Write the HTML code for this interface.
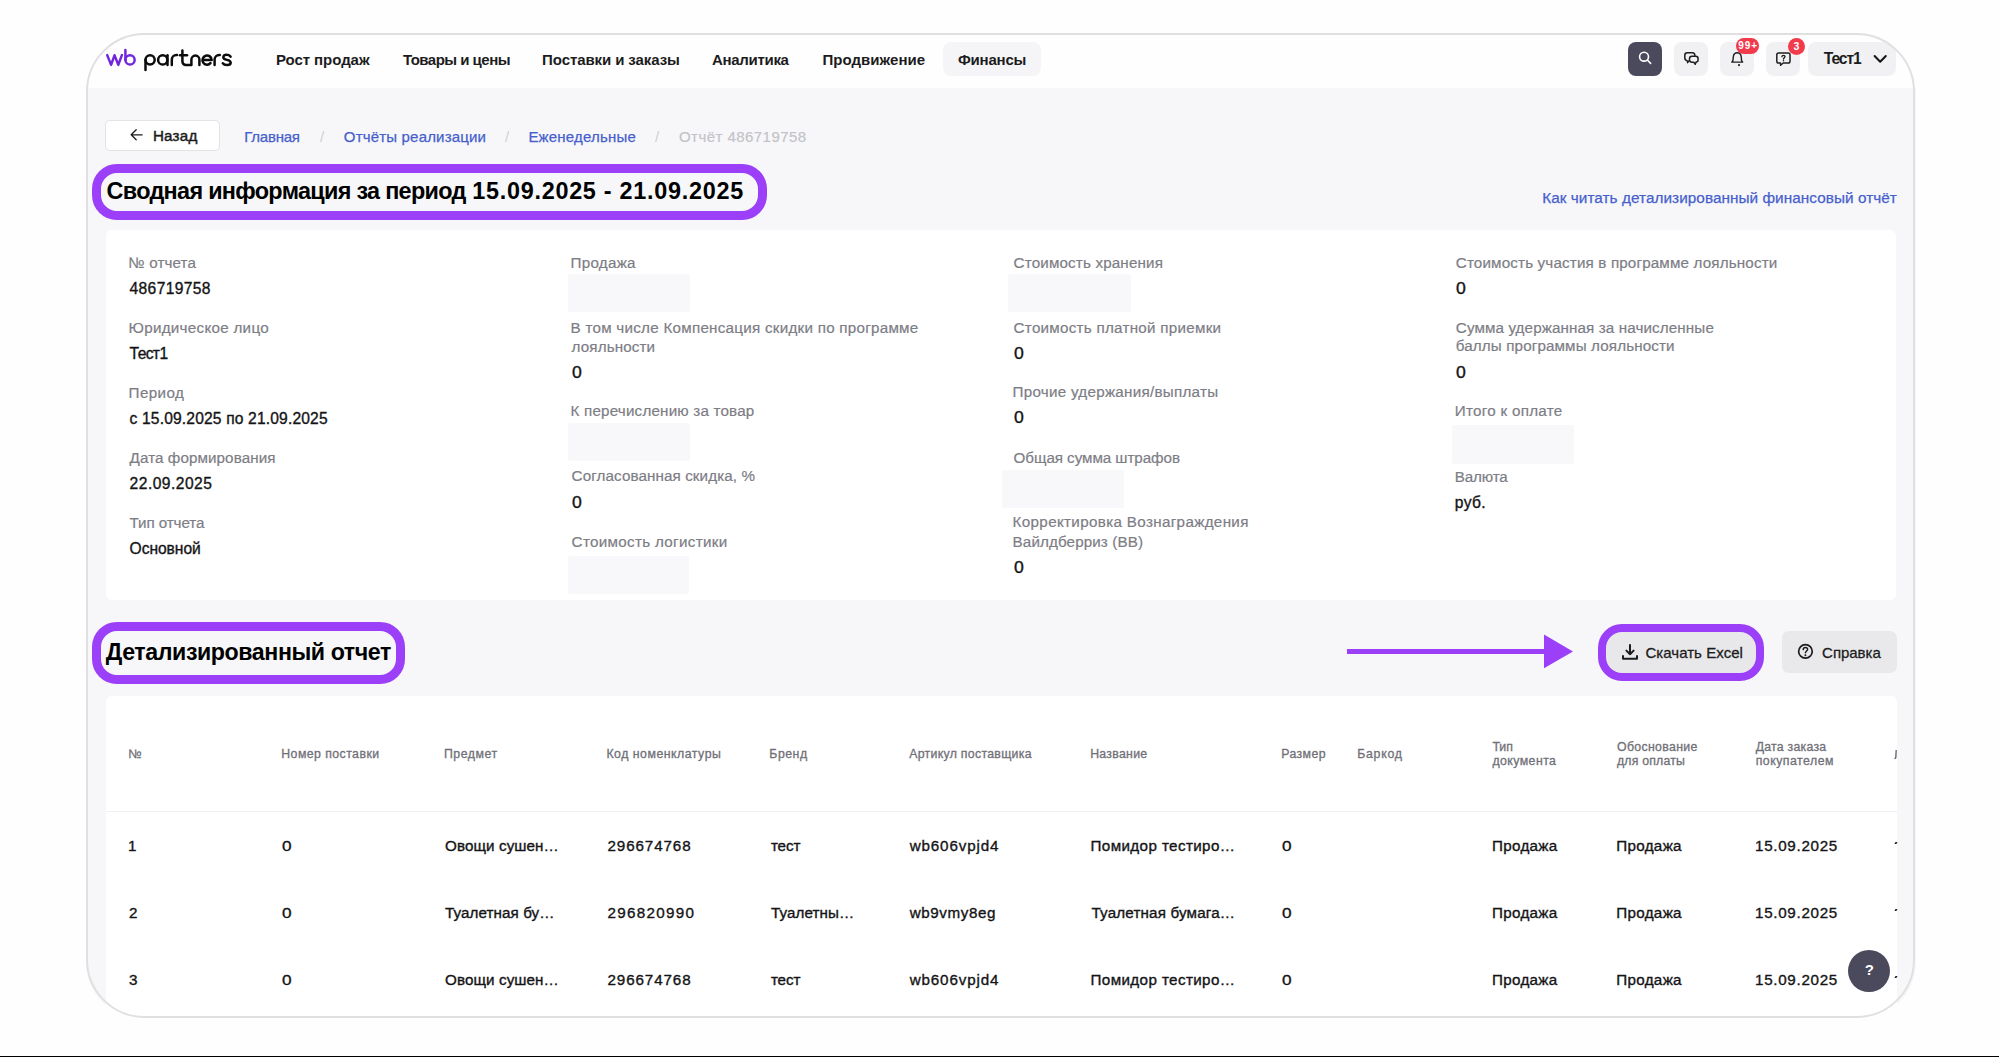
<!DOCTYPE html>
<html lang="ru">
<head>
<meta charset="utf-8">
<title>wb partners — Отчёт 486719758</title>
<style>
html,body{margin:0;padding:0;}
body{width:1999px;height:1057px;background:#fefefe;position:relative;overflow:hidden;font-family:"Liberation Sans",sans-serif;}
#clip{position:absolute;left:86px;top:34px;width:1830px;height:986px;border-radius:58px;overflow:hidden;background:#fefefe;}
#pg{position:absolute;left:-86px;top:-34px;width:1999px;height:1057px;}
#border{position:absolute;left:86px;top:33.4px;width:1824.8px;height:981px;border:2.6px solid #e0e0e2;border-radius:58.6px;pointer-events:none;}
.a{position:absolute;box-sizing:border-box;}
.t{position:absolute;white-space:nowrap;line-height:1;font-family:"Liberation Sans",sans-serif;}
svg{position:absolute;overflow:visible;}
#botline{position:absolute;left:0;top:1055.7px;width:1999px;height:1.3px;background:#000;}
</style>
</head>
<body>
<div id="clip"><div id="pg">
<!-- content background -->
<div class="a" style="left:86px;top:88px;width:1830px;height:940px;background:#f7f7f9;"></div>
<!-- nav active pill -->
<div class="a" style="left:943px;top:42.2px;width:98px;height:33.8px;border-radius:8px;background:#f5f5f7;"></div>
<!-- header buttons -->
<div class="a" style="left:1628px;top:41.6px;width:34.4px;height:34.3px;border-radius:8px;background:#4b4a5c;"></div>
<div class="a" style="left:1674px;top:42.2px;width:34px;height:33.8px;border-radius:8px;background:#f1f1f3;"></div>
<div class="a" style="left:1720px;top:42.2px;width:33.6px;height:33.8px;border-radius:8px;background:#f1f1f3;"></div>
<div class="a" style="left:1766.4px;top:41.8px;width:33.4px;height:34px;border-radius:8px;background:#f1f1f3;"></div>
<div class="a" style="left:1808.4px;top:42px;width:88.1px;height:33.8px;border-radius:8px;background:#f1f1f3;"></div>
<!-- back button -->
<div class="a" style="left:105.4px;top:120.3px;width:115.1px;height:30.5px;border-radius:5px;background:#fff;border:1px solid #e3e3e6;"></div>
<!-- title highlight -->
<div class="a" style="left:92px;top:163.5px;width:675px;height:56.5px;border-radius:25px;border:9px solid #9b3ff8;"></div>
<!-- card 1 -->
<div class="a" style="left:106px;top:230px;width:1790px;height:370px;border-radius:6px;background:#fff;"></div>
<div class="a" style="left:568px;top:274.2px;width:122px;height:37.4px;border-radius:2.5px;background:#f8f8fa;"></div>
<div class="a" style="left:568.2px;top:423.1px;width:121.6px;height:37.9px;border-radius:2.5px;background:#f8f8fa;"></div>
<div class="a" style="left:568.2px;top:555.6px;width:120.5px;height:38.4px;border-radius:2.5px;background:#f8f8fa;"></div>
<div class="a" style="left:1008.3px;top:274.3px;width:122.9px;height:37.3px;border-radius:2.5px;background:#f8f8fa;"></div>
<div class="a" style="left:1002.2px;top:470.2px;width:122.2px;height:37.8px;border-radius:2.5px;background:#f8f8fa;"></div>
<div class="a" style="left:1452px;top:425px;width:121.5px;height:38.8px;border-radius:2.5px;background:#f8f8fa;"></div>
<!-- section 2 highlight -->
<div class="a" style="left:92px;top:621.7px;width:312.6px;height:62.3px;border-radius:25px;border:9px solid #9b3ff8;"></div>
<!-- arrow -->
<div class="a" style="left:1347.2px;top:648.5px;width:200px;height:5.5px;background:#9b3ff8;"></div>
<svg style="left:0;top:0" width="1" height="1"><polygon points="1544,634.5 1573,651.4 1544,668.3" fill="#9b3ff8"/></svg>
<!-- excel button -->
<div class="a" style="left:1597.6px;top:624.3px;width:166.2px;height:56.3px;border-radius:24px;border:8.6px solid #9b3ff8;background:#e8e8ea;"></div>
<!-- spravka button -->
<div class="a" style="left:1781.6px;top:630.9px;width:115.9px;height:42px;border-radius:7px;background:#e9e9ec;"></div>
<!-- table card -->
<div class="a" style="left:106px;top:695.8px;width:1790.5px;height:400px;border-radius:6px;background:#fff;"></div>
<div class="a" style="left:106px;top:810.5px;width:1790.5px;height:1px;background:#f0f0f2;"></div>
<!-- help bubble -->
<div class="a" style="left:1847.6px;top:950.2px;width:42.2px;height:42px;border-radius:50%;background:#4b4a5c;"></div>
<!-- logo -->
<svg style="left:0;top:0" width="1" height="1">
 <g fill="none" stroke-width="2.5" stroke-linecap="round" stroke-linejoin="round">
  <g stroke="#7127de">
   <path d="M107.2,55.1 L111.1,64.9 L114.5,55.3 L118.3,64.9 L121.9,55.1"/>
   <path d="M125.4,49.9 V60"/>
   <circle cx="130.05" cy="59.95" r="4.6"/>
  </g>
  <g stroke="#0c0c0e">
   <path d="M145.5,70 V59.8"/>
   <circle cx="150.1" cy="59.8" r="4.6"/>
   <circle cx="162.7" cy="59.9" r="4.6"/>
   <path d="M167.5,55.2 V65"/>
   <path d="M171.8,65 V59.6 A4.6,4.6 0 0 1 176.4,55 H177"/>
   <path d="M182.4,50.5 V61.6 A3.4,3.4 0 0 0 185.8,65 H191.4 V59.6 A4,4 0 0 1 199.4,59.6 V65"/>
   <path d="M180,55.3 H187"/>
   <path d="M202.6,60 H211.7 A4.6,4.6 0 1 0 210.5,63.2"/>
   <path d="M214.6,65 V59.6 A4.6,4.6 0 0 1 219.2,55 H219.8"/>
   <path d="M230.6,56.6 C229.9,55.3 228.6,54.7 226.8,54.7 C224.7,54.7 223.3,55.6 223.3,57.3 C223.3,59.1 225,59.5 226.9,59.9 C228.9,60.3 230.7,60.8 230.7,62.8 C230.7,64.4 229.2,65.1 227,65.1 C225.1,65.1 223.6,64.5 222.8,63.3"/>
  </g>
 </g>
</svg>
<!-- header icons -->
<svg style="left:0;top:0" width="1" height="1">
 <g fill="none" stroke-linecap="round" stroke-linejoin="round">
  <circle cx="1644.05" cy="56.7" r="4.45" stroke="#fff" stroke-width="1.6"/>
  <path d="M1647.6,60.3 L1650.6,63.4" stroke="#fff" stroke-width="1.6"/>
  <!-- chat -->
  <path d="M1689.2,60.6 L1687.6,62.6 L1687.4,60.9 C1685.6,60.5 1684.8,59.6 1684.8,57.8 V55.3 C1684.8,53.6 1685.7,52.8 1687.4,52.8 H1692.4 C1694,52.8 1694.9,53.6 1694.9,55.6" stroke="#1f1f22" stroke-width="1.5"/>
  <path d="M1691.9,56.3 H1695.6 C1697.3,56.3 1698.1,57.1 1698.1,58.8 V59.7 C1698.1,61.2 1697.3,62 1696.1,62.1 L1695.3,64.3 L1693.8,62.2 H1691.9 C1690.3,62.2 1689.5,61.4 1689.5,59.8 V58.8 C1689.5,57.1 1690.3,56.3 1691.9,56.3 Z" stroke="#1f1f22" stroke-width="1.5"/>
  <!-- bell -->
  <path d="M1731.8,62.1 H1742.7 L1741.6,60.6 L1741.2,56.8 C1740.9,54.2 1739.4,52.8 1737.3,52.8 C1735.2,52.8 1733.6,54.2 1733.3,56.8 L1732.9,60.6 Z" stroke="#1f1f22" stroke-width="1.4"/>
  <!-- question bubble -->
  <path d="M1778.6,53 H1788.2 C1789.4,53 1790,53.6 1790,54.8 V61.2 C1790,62.4 1789.4,63 1788.2,63 H1783.2 L1780.6,65.3 L1780.5,63 H1778.6 C1777.4,63 1776.8,62.4 1776.8,61.2 V54.8 C1776.8,53.6 1777.4,53 1778.6,53 Z" stroke="#1f1f22" stroke-width="1.5"/>
  <path d="M1781.9,56.6 C1782,55.8 1782.6,55.3 1783.5,55.3 C1784.4,55.3 1785,55.9 1785,56.6 C1785,57.6 1783.6,57.8 1783.5,59" stroke="#1f1f22" stroke-width="1.35"/>
  <!-- chevron -->
  <path d="M1874.6,56 L1880.2,61.8 L1885.8,56" stroke="#141416" stroke-width="2"/>
  <!-- back arrow -->
  <path d="M142.2,134.8 H131.2 M136.2,129.8 L131.2,134.8 L136.2,139.8" stroke="#1c1c20" stroke-width="1.3"/>
  <!-- download -->
  <path d="M1630,645 V654.2 M1626.4,650.6 L1630,654.2 L1633.6,650.6 M1623,656 V658.7 H1637 V656" stroke="#1c1c20" stroke-width="2"/>
  <!-- question circle -->
  <circle cx="1805.45" cy="651.4" r="6.8" stroke="#1c1c20" stroke-width="1.7"/>
  <path d="M1803.2,649.6 C1803.3,648.3 1804.2,647.6 1805.4,647.6 C1806.7,647.6 1807.6,648.4 1807.6,649.5 C1807.6,650.9 1805.5,651.1 1805.4,652.8" stroke="#1c1c20" stroke-width="1.5"/>
 </g>
 <circle cx="1783.5" cy="60.8" r="0.8" fill="#1f1f22"/>
 <circle cx="1739" cy="65.1" r="1.1" fill="#1f1f22"/>
 <circle cx="1805.4" cy="655.3" r="0.95" fill="#1c1c20"/>
</svg>
<!-- badges -->
<div class="a" style="left:1736.4px;top:37.7px;width:23.1px;height:16.4px;border-radius:8.2px;background:#f23a4d;"></div>
<div class="a" style="left:1788.2px;top:37.9px;width:17px;height:17px;border-radius:50%;background:#f23a4d;"></div>
<!-- clipped next-column glyph remnants -->
<svg style="left:0;top:0" width="1" height="1"><path d="M1896.2,750 L1895.8,757.6 L1894.6,758.8" fill="none" stroke="#5c5c64" stroke-width="1.3"/></svg>
<div class="a" style="left:1894.6px;top:841.6px;width:2px;height:1.8px;background:#222;transform:skewX(-30deg);"></div>
<div class="a" style="left:1894.6px;top:908.6px;width:2px;height:1.8px;background:#222;transform:skewX(-30deg);"></div>
<div class="a" style="left:1894.6px;top:975.6px;width:2px;height:1.8px;background:#222;transform:skewX(-30deg);"></div>

<div class="t" style="left:275.90px;top:51.95px;font-size:15px;font-weight:700;color:#1c1c20;letter-spacing:-0.050px;">Рост продаж</div>
<div class="t" style="left:403.00px;top:51.95px;font-size:15px;font-weight:700;color:#1c1c20;letter-spacing:-0.517px;">Товары и цены</div>
<div class="t" style="left:542.10px;top:51.95px;font-size:15px;font-weight:700;color:#1c1c20;letter-spacing:-0.092px;">Поставки и заказы</div>
<div class="t" style="left:711.90px;top:51.95px;font-size:15px;font-weight:700;color:#1c1c20;letter-spacing:-0.295px;">Аналитика</div>
<div class="t" style="left:822.40px;top:51.95px;font-size:15px;font-weight:700;color:#1c1c20;letter-spacing:0.047px;">Продвижение</div>
<div class="t" style="left:958.00px;top:51.95px;font-size:15px;font-weight:700;color:#1c1c20;letter-spacing:-0.205px;">Финансы</div>
<div class="t" style="left:1823.80px;top:51.34px;font-size:15.6px;font-weight:700;color:#1c1c20;letter-spacing:-1.081px;">Тест1</div>
<div class="t" style="left:152.90px;top:128.48px;font-size:15.2px;color:#1c1c20;letter-spacing:0.212px;-webkit-text-stroke:0.45px #1c1c20;">Назад</div>
<div class="t" style="left:244.30px;top:128.65px;font-size:15px;color:#4560cc;letter-spacing:-0.245px;-webkit-text-stroke:0.25px #4560cc;">Главная</div>
<div class="t" style="left:320.00px;top:128.65px;font-size:15px;color:#cfcfd4;">/</div>
<div class="t" style="left:343.80px;top:128.65px;font-size:15px;color:#4560cc;letter-spacing:0.184px;-webkit-text-stroke:0.25px #4560cc;">Отчёты реализации</div>
<div class="t" style="left:505.00px;top:128.65px;font-size:15px;color:#cfcfd4;">/</div>
<div class="t" style="left:528.40px;top:128.65px;font-size:15px;color:#4560cc;letter-spacing:0.190px;-webkit-text-stroke:0.25px #4560cc;">Еженедельные</div>
<div class="t" style="left:655.00px;top:128.65px;font-size:15px;color:#cfcfd4;">/</div>
<div class="t" style="left:679.00px;top:128.65px;font-size:15px;color:#c3c3c9;letter-spacing:0.452px;-webkit-text-stroke:0.2px #c3c3c9;">Отчёт 486719758</div>
<div class="t" style="left:106.60px;top:179.71px;font-size:23.4px;font-weight:700;color:#000;letter-spacing:-0.690px;">Сводная информация за период</div>
<div class="t" style="left:472.20px;top:179.71px;font-size:23.4px;font-weight:700;color:#000;letter-spacing:0.736px;">15.09.2025 - 21.09.2025</div>
<div class="t" style="left:1542.20px;top:189.90px;font-size:15.3px;color:#4560cc;letter-spacing:0.061px;-webkit-text-stroke:0.25px #4560cc;">Как читать детализированный финансовый отчёт</div>
<div class="t" style="left:128.60px;top:254.68px;font-size:15.2px;color:#7d7d85;letter-spacing:0.097px;-webkit-text-stroke:0.2px #7d7d85;">№ отчета</div>
<div class="t" style="left:129.60px;top:280.74px;font-size:15.6px;color:#141416;letter-spacing:0.340px;-webkit-text-stroke:0.35px #141416;">486719758</div>
<div class="t" style="left:128.60px;top:319.88px;font-size:15.2px;color:#7d7d85;letter-spacing:0.282px;-webkit-text-stroke:0.2px #7d7d85;">Юридическое лицо</div>
<div class="t" style="left:129.60px;top:345.94px;font-size:15.6px;color:#141416;letter-spacing:-0.615px;-webkit-text-stroke:0.35px #141416;">Тест1</div>
<div class="t" style="left:128.60px;top:384.68px;font-size:15.2px;color:#7d7d85;letter-spacing:0.399px;-webkit-text-stroke:0.2px #7d7d85;">Период</div>
<div class="t" style="left:129.60px;top:410.54px;font-size:15.6px;color:#141416;letter-spacing:0.159px;-webkit-text-stroke:0.35px #141416;">с 15.09.2025 по 21.09.2025</div>
<div class="t" style="left:129.60px;top:449.88px;font-size:15.2px;color:#7d7d85;letter-spacing:0.083px;-webkit-text-stroke:0.2px #7d7d85;">Дата формирования</div>
<div class="t" style="left:129.60px;top:475.94px;font-size:15.6px;color:#141416;letter-spacing:0.470px;-webkit-text-stroke:0.35px #141416;">22.09.2025</div>
<div class="t" style="left:129.60px;top:514.68px;font-size:15.2px;color:#7d7d85;letter-spacing:-0.105px;-webkit-text-stroke:0.2px #7d7d85;">Тип отчета</div>
<div class="t" style="left:129.60px;top:541.14px;font-size:15.6px;color:#141416;letter-spacing:-0.054px;-webkit-text-stroke:0.35px #141416;">Основной</div>
<div class="t" style="left:570.60px;top:254.68px;font-size:15.2px;color:#7d7d85;letter-spacing:0.259px;-webkit-text-stroke:0.2px #7d7d85;">Продажа</div>
<div class="t" style="left:570.60px;top:319.88px;font-size:15.2px;color:#7d7d85;letter-spacing:0.255px;-webkit-text-stroke:0.2px #7d7d85;">В том числе Компенсация скидки по программе</div>
<div class="t" style="left:571.60px;top:339.08px;font-size:15.2px;color:#7d7d85;letter-spacing:0.127px;-webkit-text-stroke:0.2px #7d7d85;">лояльности</div>
<div class="t" style="left:571.60px;top:365.24px;font-size:15.6px;color:#141416;-webkit-text-stroke:0.35px #141416;transform:scaleX(1.13);transform-origin:0 0;">0</div>
<div class="t" style="left:570.60px;top:403.38px;font-size:15.2px;color:#7d7d85;letter-spacing:0.186px;-webkit-text-stroke:0.2px #7d7d85;">К перечислению за товар</div>
<div class="t" style="left:571.60px;top:468.38px;font-size:15.2px;color:#7d7d85;letter-spacing:0.100px;-webkit-text-stroke:0.2px #7d7d85;">Согласованная скидка, %</div>
<div class="t" style="left:571.60px;top:495.24px;font-size:15.6px;color:#141416;-webkit-text-stroke:0.35px #141416;transform:scaleX(1.13);transform-origin:0 0;">0</div>
<div class="t" style="left:571.60px;top:533.88px;font-size:15.2px;color:#7d7d85;letter-spacing:0.315px;-webkit-text-stroke:0.2px #7d7d85;">Стоимость логистики</div>
<div class="t" style="left:1013.60px;top:254.58px;font-size:15.2px;color:#7d7d85;letter-spacing:0.156px;-webkit-text-stroke:0.2px #7d7d85;">Стоимость хранения</div>
<div class="t" style="left:1013.60px;top:319.68px;font-size:15.2px;color:#7d7d85;letter-spacing:0.265px;-webkit-text-stroke:0.2px #7d7d85;">Стоимость платной приемки</div>
<div class="t" style="left:1013.60px;top:345.74px;font-size:15.6px;color:#141416;-webkit-text-stroke:0.35px #141416;transform:scaleX(1.13);transform-origin:0 0;">0</div>
<div class="t" style="left:1012.60px;top:383.88px;font-size:15.2px;color:#7d7d85;letter-spacing:0.268px;-webkit-text-stroke:0.2px #7d7d85;">Прочие удержания/выплаты</div>
<div class="t" style="left:1013.60px;top:410.44px;font-size:15.6px;color:#141416;-webkit-text-stroke:0.35px #141416;transform:scaleX(1.13);transform-origin:0 0;">0</div>
<div class="t" style="left:1013.60px;top:449.68px;font-size:15.2px;color:#7d7d85;letter-spacing:-0.063px;-webkit-text-stroke:0.2px #7d7d85;">Общая сумма штрафов</div>
<div class="t" style="left:1012.60px;top:514.38px;font-size:15.2px;color:#7d7d85;letter-spacing:0.338px;-webkit-text-stroke:0.2px #7d7d85;">Корректировка Вознаграждения</div>
<div class="t" style="left:1012.60px;top:533.68px;font-size:15.2px;color:#7d7d85;letter-spacing:0.111px;-webkit-text-stroke:0.2px #7d7d85;">Вайлдберриз (ВВ)</div>
<div class="t" style="left:1013.60px;top:559.84px;font-size:15.6px;color:#141416;-webkit-text-stroke:0.35px #141416;transform:scaleX(1.13);transform-origin:0 0;">0</div>
<div class="t" style="left:1455.80px;top:254.58px;font-size:15.2px;color:#7d7d85;letter-spacing:0.156px;-webkit-text-stroke:0.2px #7d7d85;">Стоимость участия в программе лояльности</div>
<div class="t" style="left:1455.80px;top:280.84px;font-size:15.6px;color:#141416;-webkit-text-stroke:0.35px #141416;transform:scaleX(1.13);transform-origin:0 0;">0</div>
<div class="t" style="left:1455.80px;top:319.58px;font-size:15.2px;color:#7d7d85;letter-spacing:0.114px;-webkit-text-stroke:0.2px #7d7d85;">Сумма удержанная за начисленные</div>
<div class="t" style="left:1455.80px;top:338.48px;font-size:15.2px;color:#7d7d85;letter-spacing:0.129px;-webkit-text-stroke:0.2px #7d7d85;">баллы программы лояльности</div>
<div class="t" style="left:1455.80px;top:364.64px;font-size:15.6px;color:#141416;-webkit-text-stroke:0.35px #141416;transform:scaleX(1.13);transform-origin:0 0;">0</div>
<div class="t" style="left:1454.80px;top:403.48px;font-size:15.2px;color:#7d7d85;letter-spacing:0.284px;-webkit-text-stroke:0.2px #7d7d85;">Итого к оплате</div>
<div class="t" style="left:1454.80px;top:468.68px;font-size:15.2px;color:#7d7d85;letter-spacing:-0.156px;-webkit-text-stroke:0.2px #7d7d85;">Валюта</div>
<div class="t" style="left:1454.80px;top:494.84px;font-size:15.6px;color:#141416;letter-spacing:0.366px;-webkit-text-stroke:0.35px #141416;">руб.</div>
<div class="t" style="left:105.80px;top:640.68px;font-size:23.2px;font-weight:700;color:#000;letter-spacing:-0.423px;">Детализированный отчет</div>
<div class="t" style="left:1645.50px;top:645.15px;font-size:15px;color:#1c1c20;letter-spacing:0.028px;-webkit-text-stroke:0.3px #1c1c20;">Скачать Excel</div>
<div class="t" style="left:1822.10px;top:645.15px;font-size:15px;color:#1c1c20;letter-spacing:-0.033px;-webkit-text-stroke:0.3px #1c1c20;">Справка</div>
<div class="t" style="left:1738.30px;top:41.10px;font-size:10px;font-weight:700;color:#fff;letter-spacing:0.888px;">99+</div>
<div class="t" style="left:1793.60px;top:41.28px;font-size:10.5px;font-weight:700;color:#fff;">3</div>
<div class="t" style="left:1864.80px;top:961.85px;font-size:15px;font-weight:700;color:#fff;">?</div>
<div class="t" style="left:128.20px;top:748.25px;font-size:12.3px;color:#707078;-webkit-text-stroke:0.3px #707078;">№</div>
<div class="t" style="left:281.30px;top:748.25px;font-size:12.3px;color:#707078;letter-spacing:0.442px;-webkit-text-stroke:0.3px #707078;">Номер поставки</div>
<div class="t" style="left:443.90px;top:748.25px;font-size:12.3px;color:#707078;letter-spacing:0.566px;-webkit-text-stroke:0.3px #707078;">Предмет</div>
<div class="t" style="left:606.40px;top:748.25px;font-size:12.3px;color:#707078;letter-spacing:0.512px;-webkit-text-stroke:0.3px #707078;">Код номенклатуры</div>
<div class="t" style="left:769.30px;top:748.25px;font-size:12.3px;color:#707078;letter-spacing:0.515px;-webkit-text-stroke:0.3px #707078;">Бренд</div>
<div class="t" style="left:909.20px;top:748.25px;font-size:12.3px;color:#707078;letter-spacing:0.300px;-webkit-text-stroke:0.3px #707078;">Артикул поставщика</div>
<div class="t" style="left:1090.20px;top:748.25px;font-size:12.3px;color:#707078;letter-spacing:0.284px;-webkit-text-stroke:0.3px #707078;">Название</div>
<div class="t" style="left:1281.20px;top:748.25px;font-size:12.3px;color:#707078;letter-spacing:0.435px;-webkit-text-stroke:0.3px #707078;">Размер</div>
<div class="t" style="left:1357.20px;top:748.25px;font-size:12.3px;color:#707078;letter-spacing:0.753px;-webkit-text-stroke:0.3px #707078;">Баркод</div>
<div class="t" style="left:1492.40px;top:740.75px;font-size:12.3px;color:#707078;-webkit-text-stroke:0.3px #707078;">Тип</div>
<div class="t" style="left:1492.40px;top:755.44px;font-size:12.3px;color:#707078;letter-spacing:0.447px;-webkit-text-stroke:0.3px #707078;">документа</div>
<div class="t" style="left:1617.00px;top:740.75px;font-size:12.3px;color:#707078;letter-spacing:0.338px;-webkit-text-stroke:0.3px #707078;">Обоснование</div>
<div class="t" style="left:1617.00px;top:755.44px;font-size:12.3px;color:#707078;letter-spacing:0.189px;-webkit-text-stroke:0.3px #707078;">для оплаты</div>
<div class="t" style="left:1755.70px;top:740.75px;font-size:12.3px;color:#707078;letter-spacing:0.249px;-webkit-text-stroke:0.3px #707078;">Дата заказа</div>
<div class="t" style="left:1755.70px;top:755.44px;font-size:12.3px;color:#707078;letter-spacing:0.497px;-webkit-text-stroke:0.3px #707078;">покупателем</div>
<div class="t" style="left:128.10px;top:838.28px;font-size:15.2px;color:#141416;-webkit-text-stroke:0.35px #141416;">1</div>
<div class="t" style="left:282.30px;top:838.28px;font-size:15.2px;color:#141416;-webkit-text-stroke:0.35px #141416;transform:scaleX(1.13);transform-origin:0 0;">0</div>
<div class="t" style="left:445.10px;top:838.28px;font-size:15.2px;color:#141416;letter-spacing:0.085px;-webkit-text-stroke:0.35px #141416;">Овощи сушен…</div>
<div class="t" style="left:607.50px;top:838.28px;font-size:15.2px;color:#141416;letter-spacing:0.891px;-webkit-text-stroke:0.35px #141416;">296674768</div>
<div class="t" style="left:770.90px;top:838.28px;font-size:15.2px;color:#141416;letter-spacing:-0.075px;-webkit-text-stroke:0.35px #141416;">тест</div>
<div class="t" style="left:909.70px;top:838.28px;font-size:15.2px;color:#141416;letter-spacing:0.854px;-webkit-text-stroke:0.35px #141416;">wb606vpjd4</div>
<div class="t" style="left:1090.50px;top:838.28px;font-size:15.2px;color:#141416;letter-spacing:0.392px;-webkit-text-stroke:0.35px #141416;">Помидор тестиро…</div>
<div class="t" style="left:1282.20px;top:838.28px;font-size:15.2px;color:#141416;-webkit-text-stroke:0.35px #141416;transform:scaleX(1.13);transform-origin:0 0;">0</div>
<div class="t" style="left:1492.00px;top:838.28px;font-size:15.2px;color:#141416;letter-spacing:0.309px;-webkit-text-stroke:0.35px #141416;">Продажа</div>
<div class="t" style="left:1616.30px;top:838.28px;font-size:15.2px;color:#141416;letter-spacing:0.309px;-webkit-text-stroke:0.35px #141416;">Продажа</div>
<div class="t" style="left:1755.00px;top:838.28px;font-size:15.2px;color:#141416;letter-spacing:0.693px;-webkit-text-stroke:0.35px #141416;">15.09.2025</div>
<div class="t" style="left:129.10px;top:905.28px;font-size:15.2px;color:#141416;-webkit-text-stroke:0.35px #141416;">2</div>
<div class="t" style="left:282.30px;top:905.28px;font-size:15.2px;color:#141416;-webkit-text-stroke:0.35px #141416;transform:scaleX(1.13);transform-origin:0 0;">0</div>
<div class="t" style="left:445.10px;top:905.28px;font-size:15.2px;color:#141416;letter-spacing:0.076px;-webkit-text-stroke:0.35px #141416;">Туалетная бу…</div>
<div class="t" style="left:607.50px;top:905.28px;font-size:15.2px;color:#141416;letter-spacing:1.291px;-webkit-text-stroke:0.35px #141416;">296820990</div>
<div class="t" style="left:770.90px;top:905.28px;font-size:15.2px;color:#141416;letter-spacing:0.093px;-webkit-text-stroke:0.35px #141416;">Туалетны…</div>
<div class="t" style="left:909.70px;top:905.28px;font-size:15.2px;color:#141416;letter-spacing:0.601px;-webkit-text-stroke:0.35px #141416;">wb9vmy8eg</div>
<div class="t" style="left:1091.50px;top:905.28px;font-size:15.2px;color:#141416;letter-spacing:0.165px;-webkit-text-stroke:0.35px #141416;">Туалетная бумага…</div>
<div class="t" style="left:1282.20px;top:905.28px;font-size:15.2px;color:#141416;-webkit-text-stroke:0.35px #141416;transform:scaleX(1.13);transform-origin:0 0;">0</div>
<div class="t" style="left:1492.00px;top:905.28px;font-size:15.2px;color:#141416;letter-spacing:0.309px;-webkit-text-stroke:0.35px #141416;">Продажа</div>
<div class="t" style="left:1616.30px;top:905.28px;font-size:15.2px;color:#141416;letter-spacing:0.309px;-webkit-text-stroke:0.35px #141416;">Продажа</div>
<div class="t" style="left:1755.00px;top:905.28px;font-size:15.2px;color:#141416;letter-spacing:0.693px;-webkit-text-stroke:0.35px #141416;">15.09.2025</div>
<div class="t" style="left:129.10px;top:972.38px;font-size:15.2px;color:#141416;-webkit-text-stroke:0.35px #141416;">3</div>
<div class="t" style="left:282.30px;top:972.38px;font-size:15.2px;color:#141416;-webkit-text-stroke:0.35px #141416;transform:scaleX(1.13);transform-origin:0 0;">0</div>
<div class="t" style="left:445.10px;top:972.38px;font-size:15.2px;color:#141416;letter-spacing:0.085px;-webkit-text-stroke:0.35px #141416;">Овощи сушен…</div>
<div class="t" style="left:607.50px;top:972.38px;font-size:15.2px;color:#141416;letter-spacing:0.891px;-webkit-text-stroke:0.35px #141416;">296674768</div>
<div class="t" style="left:770.90px;top:972.38px;font-size:15.2px;color:#141416;letter-spacing:-0.075px;-webkit-text-stroke:0.35px #141416;">тест</div>
<div class="t" style="left:909.70px;top:972.38px;font-size:15.2px;color:#141416;letter-spacing:0.854px;-webkit-text-stroke:0.35px #141416;">wb606vpjd4</div>
<div class="t" style="left:1090.50px;top:972.38px;font-size:15.2px;color:#141416;letter-spacing:0.392px;-webkit-text-stroke:0.35px #141416;">Помидор тестиро…</div>
<div class="t" style="left:1282.20px;top:972.38px;font-size:15.2px;color:#141416;-webkit-text-stroke:0.35px #141416;transform:scaleX(1.13);transform-origin:0 0;">0</div>
<div class="t" style="left:1492.00px;top:972.38px;font-size:15.2px;color:#141416;letter-spacing:0.309px;-webkit-text-stroke:0.35px #141416;">Продажа</div>
<div class="t" style="left:1616.30px;top:972.38px;font-size:15.2px;color:#141416;letter-spacing:0.309px;-webkit-text-stroke:0.35px #141416;">Продажа</div>
<div class="t" style="left:1755.00px;top:972.38px;font-size:15.2px;color:#141416;letter-spacing:0.693px;-webkit-text-stroke:0.35px #141416;">15.09.2025</div>
</div></div>
<div id="border"></div>
<div id="botline"></div>
</body>
</html>
